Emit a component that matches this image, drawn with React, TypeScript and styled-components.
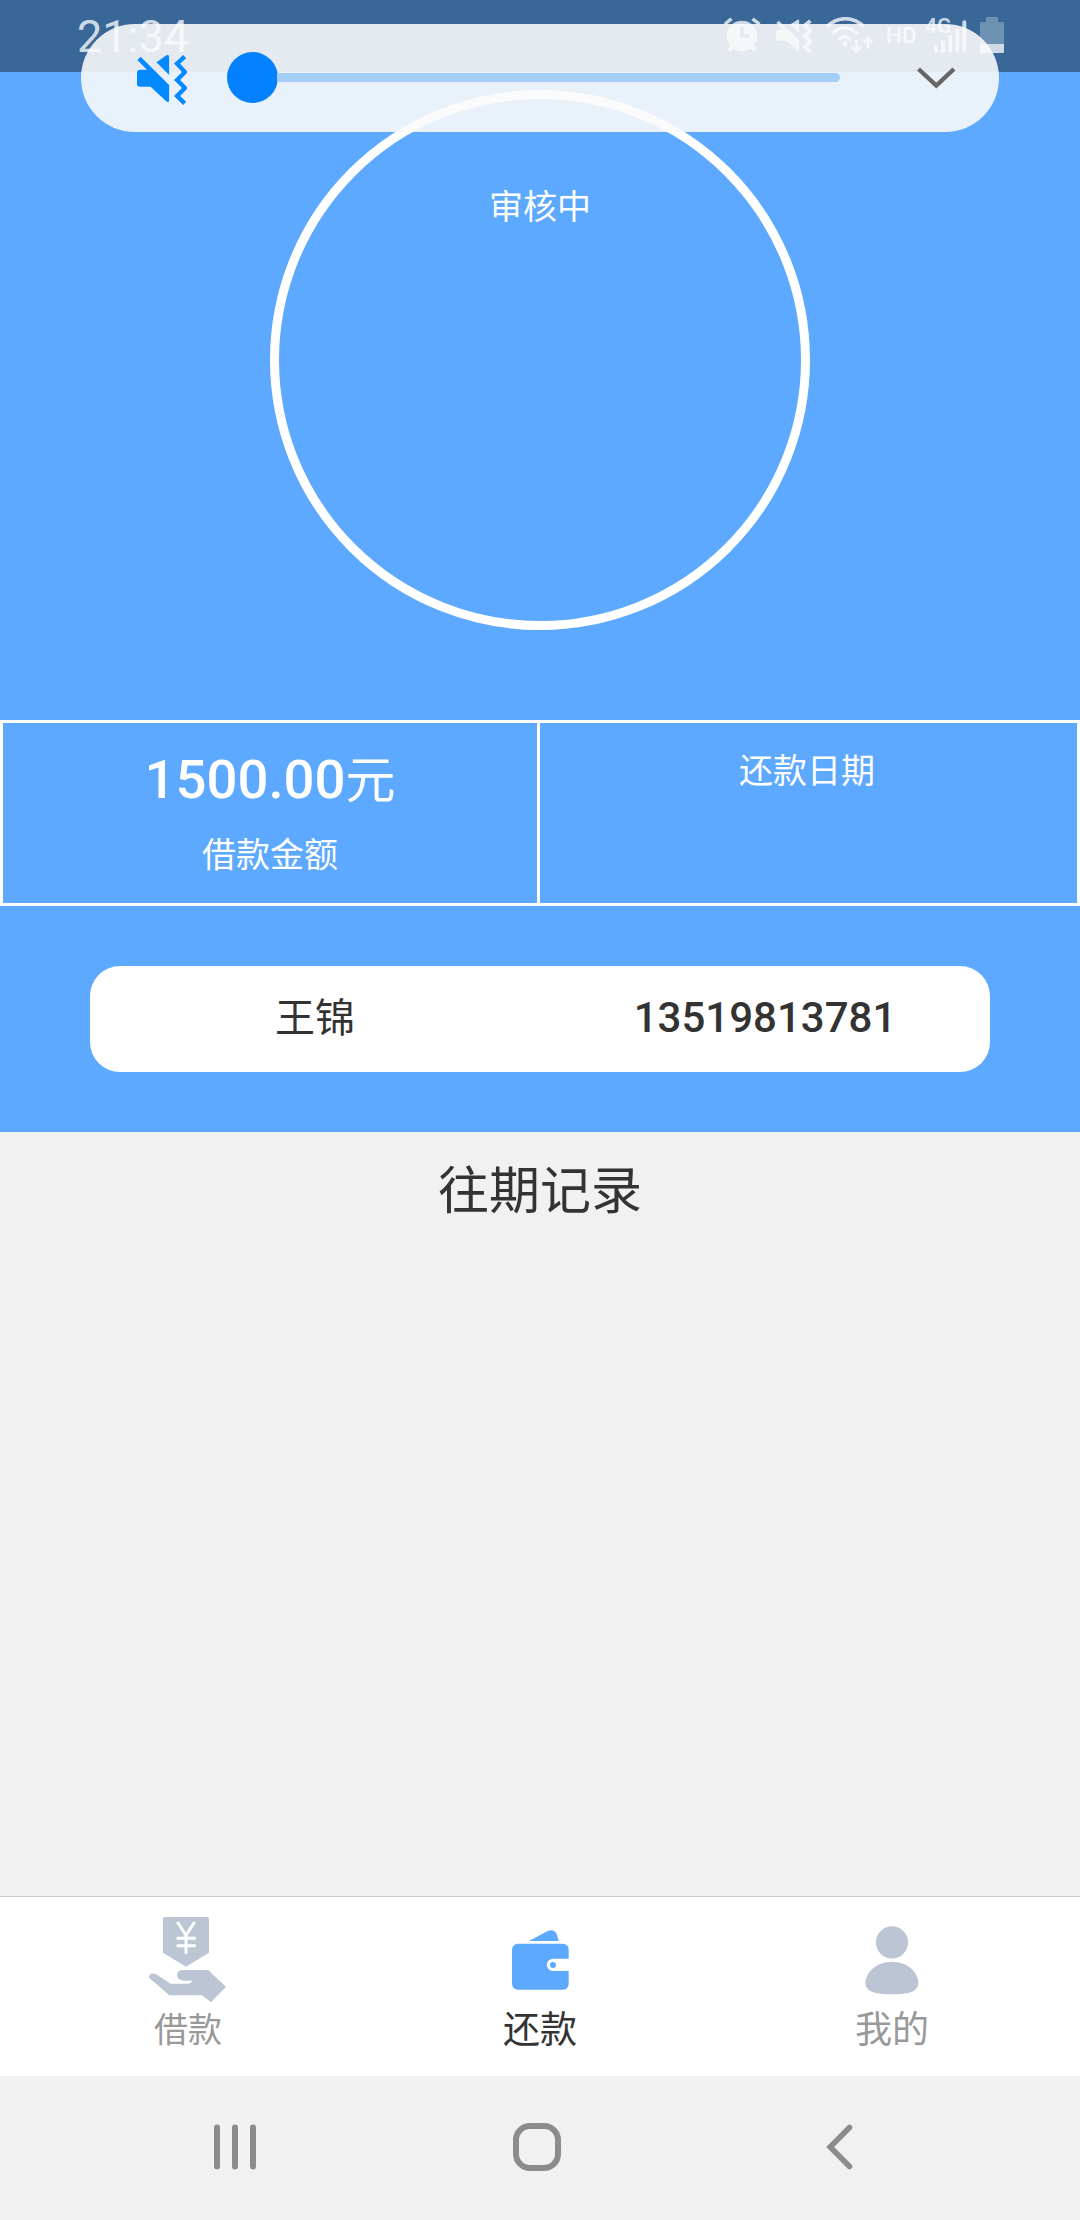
import React from "react";
import styled, { createGlobalStyle } from "styled-components";

const GlobalStyle = createGlobalStyle`
  *, *::before, *::after { box-sizing: border-box; }
  body { margin: 0; background: #f1f1f1; }
  svg { display: block; flex: none; }
`;

const Screen = styled.div`
  position: relative;
  display: flex;
  flex-direction: column;
  width: 1080px;
  height: 2220px;
  overflow: hidden;
  background: #f1f1f1;
  color: #333;
  font-family: Roboto, "Noto Sans CJK SC", sans-serif;
`;

const StatusBar = styled.header`
  display: flex;
  align-items: flex-start;
  height: 72px;
  padding: 17px 76px 0 77px;
  background: #386798;
  color: rgba(255, 255, 255, 0.76);
`;

const Clock = styled.span`
  margin-right: auto;
  font-size: 45px;
  line-height: 40px;
`;

const StatusIcons = styled.div`
  display: flex;
  align-items: flex-start;
  height: 36px;
`;

const StatusSlot = styled.div<{ $gap: number }>`
  position: relative;
  margin-left: ${(p) => p.$gap}px;
`;

const HdMark = styled.span`
  display: block;
  width: 30px;
  font-size: 22.5px;
  font-weight: 600;
  line-height: 36px;
`;

const NetworkMark = styled.span`
  position: absolute;
  left: -9px;
  top: -1px;
  font-size: 21px;
  font-weight: 600;
  line-height: 21px;
`;

const VolumePanel = styled.section`
  position: absolute;
  left: 81px;
  top: 24px;
  z-index: 2;
  display: flex;
  align-items: center;
  width: 918px;
  height: 108px;
  padding-left: 56px;
  border-radius: 54px;
  background: rgba(250, 250, 250, 0.89);
`;

const Slider = styled.div`
  display: flex;
  align-items: center;
  width: 613px;
  height: 53px;
  margin: 0 77px 2px 40px;
`;

const Thumb = styled.div`
  width: 51px;
  height: 51px;
  border-radius: 50%;
  background: #0381ff;
`;

const Track = styled.div`
  flex: 1;
  height: 9px;
  margin-left: -1px;
  border-radius: 0 5px 5px 0;
  background: #a4cef8;
`;

const Hero = styled.section`
  display: flex;
  flex-direction: column;
  align-items: center;
  height: 1060px;
  padding-top: 18px;
  background: #5ca9ff;
  color: #fff;
`;

const StatusRing = styled.div`
  display: flex;
  justify-content: center;
  width: 540px;
  height: 540px;
  padding-top: 83px;
  border: 9px solid #fff;
  border-radius: 50%;
`;

const Caption = styled.span`
  font-size: 34px;
  line-height: 50px;
`;

const Summary = styled.div`
  display: grid;
  grid-template-columns: 534px 534px;
  column-gap: 3px;
  width: 1080px;
  height: 186px;
  margin-top: 90px;
  border: 3px solid #fff;
  background: linear-gradient(#fff, #fff) 534px 0 / 3px 100% no-repeat;
`;

const SummaryCell = styled.div`
  display: flex;
  flex-direction: column;
  align-items: center;
  padding-top: 23px;
`;

const Amount = styled.strong`
  display: flex;
  align-items: baseline;
  height: 62px;
  margin-bottom: 22px;
  font-size: 54.5px;
  font-weight: 500;
  line-height: 66px;
`;

const Unit = styled.span`
  font-size: 50px;
  font-weight: 400;
`;

const BorrowerCard = styled.div`
  display: grid;
  grid-template-columns: 1fr 1fr;
  width: 900px;
  height: 106px;
  margin-top: 60px;
  border-radius: 30px;
  background: #fff;
  color: #333;
  text-align: center;
`;

const BorrowerName = styled.span`
  font-size: 40px;
  line-height: 105px;
`;

const BorrowerPhone = styled.span`
  font-size: 42px;
  font-weight: 500;
  line-height: 104px;
`;

const History = styled.main`
  flex: 1;
`;

const HistoryTitle = styled.h2`
  margin: 23px 0 0;
  font-size: 51px;
  font-weight: 400;
  line-height: 74px;
  text-align: center;
`;

const TabBar = styled.nav`
  display: grid;
  grid-template-columns: repeat(3, 352px);
  height: 180px;
  padding-left: 12px;
  border-top: 1px solid #ccc;
  background: #fff;
`;

const Tab = styled.div<{ $active?: boolean }>`
  display: flex;
  flex-direction: column;
  align-items: center;
  color: ${(p) => (p.$active ? "#333" : "#999")};
`;

const TabIcon = styled.div`
  display: flex;
  align-items: center;
  height: 110px;
  padding-top: 16px;
`;

const TabLabel = styled.span<{ $size: number }>`
  font-size: ${(p) => p.$size}px;
  line-height: 47px;
`;

const SystemNav = styled.footer`
  display: grid;
  grid-template-columns: 300px 313px 27px;
  align-items: center;
  height: 144px;
  padding: 0 0 3px 213px;
  background: #f1f1f1;
  color: #8c8c8c;
`;

const MuteIcon = ({
  width,
  height,
  color,
  wave = 13,
}: {
  width: number;
  height: number;
  color: string;
  wave?: number;
}) => (
  <svg width={width} height={height} viewBox="231 153 151 162" preserveAspectRatio="none">
    <path
      fill={color}
      d="M232 180 242 170 328 255V302Q327 308 321 305L272 260H240Q231 260 231 252V218Q231 209 240 209H261ZM290 187 320 166Q328 162 328 170V225Z"
    />
    <path d="M375 170 352 191 376 216 352 240 376 264 352 288 375 310" fill="none" stroke={color} strokeWidth={wave} />
  </svg>
);

const AlarmIcon = () => (
  <svg width="37" height="36" viewBox="724 17 37 36">
    <path
      fill="currentColor"
      fillRule="evenodd"
      d="M742 20.700A15.300 15.300 0 0 1 753.800 45.700L757 49 754 52 750.500 48.800A15.300 15.300 0 0 1 733.500 48.800L730 52 727 49 730.200 45.700A15.300 15.300 0 0 1 742 20.700ZM740.300 27V37.500H749.500V34.200H743.600V27Z"
    />
    <path d="M724.800 24.200 731.500 18.800M752.500 18.800 759.500 24.200" fill="none" stroke="currentColor" strokeWidth="3.400" />
  </svg>
);

const WifiIcon = () => (
  <svg width="47" height="36" viewBox="436 51 141 108">
    <g fill="none" stroke="currentColor" strokeWidth="10.5">
      <path d="M439 79Q465 56 494 56T550 79" />
      <path d="M454 102Q472 83 492 83T531 102" />
      <path d="M474 120Q483 110 492 110T512 120" />
      <path d="M527 120V153M514 141 527 154 540 141M562 146V114M549 127 562 114 575 127" strokeWidth="8.5" />
    </g>
    <circle cx="493" cy="131" r="8" fill="currentColor" />
  </svg>
);

const SignalIcon = () => (
  <svg width="33" height="36" viewBox="762 51 99 108">
    <path
      d="M768 143V153M789 126V153M811 110V153M832 92V153M853 67V153"
      fill="none"
      stroke="currentColor"
      strokeWidth="12"
      strokeLinecap="round"
    />
  </svg>
);

const BatteryIcon = () => (
  <svg width="24" height="36" viewBox="0 0 24 36">
    <path d="M6 0H18V5H23Q24 5 24 6V27H0V6Q0 5 1 5H6Z" fill="#fff" fillOpacity=".28" />
    <path d="M0 27H24V35Q24 36 23 36H1Q0 36 0 35Z" fill="currentColor" />
  </svg>
);

const ChevronDown = () => (
  <svg width="39" height="22" viewBox="0 0 39 22">
    <path d="M1.5 2 19.3 18.6 37 2" fill="none" stroke="#666" strokeWidth="4.4" />
  </svg>
);

const LoanIcon = () => (
  <svg width="78" height="86" viewBox="87 113 234 258">
    <path
      fill="#bcc5d4"
      d="M136 113H261Q267 113 267 119V220L198 262 129 220V119Q129 113 136 113ZM88 296C84 286 96 279 107 284L152 313H205Q213 311 218 304H190Q172 303 171 288 172 272 188 272H264L318 322 273 369 246 348H148Z"
    />
    <path d="M172 128 198 168 224 128M198 166V223M170 177H227M170 199H227" fill="none" stroke="#fff" strokeWidth="9" />
  </svg>
);

const WalletIcon = () => (
  <svg width="57" height="60" viewBox="93 87 171 180">
    <path
      fill="#5ca9ff"
      d="M144 120 200 90Q219 83 227 99L233 120ZM111 128H245Q263 129 263 146V173H216A18.500 18.500 0 0 0 216 210H263V248Q262 266 245 266H111Q94 265 93 248V146Q94 129 111 128Z"
    />
    <circle cx="216" cy="192" r="9" fill="#5ca9ff" />
  </svg>
);

const ProfileIcon = () => (
  <svg width="54" height="69" viewBox="104 75 162 207">
    <circle cx="185" cy="124" r="48.500" fill="#bcc5d4" />
    <path
      fill="#bcc5d4"
      d="M185 182C232 182 264 215 264 246 263 274 231 280 185 280S106 274 105 246C105 215 138 182 185 182Z"
    />
  </svg>
);

const RecentsIcon = () => (
  <svg width="44" height="46" viewBox="0 0 44 46">
    <path d="M4 3.500V42.500M22 3.500V42.500M40 3.500V42.500" stroke="currentColor" strokeWidth="6" strokeLinecap="round" />
  </svg>
);

const HomeIcon = () => (
  <svg width="48" height="48" viewBox="0 0 48 48">
    <rect x="3" y="3" width="42" height="42" rx="14" fill="none" stroke="currentColor" strokeWidth="6" />
  </svg>
);

const BackIcon = () => (
  <svg width="27" height="46" viewBox="0 0 27 46">
    <path d="M23.500 3.500 4.200 23 23.500 42.500" fill="none" stroke="currentColor" strokeWidth="5.600" strokeLinecap="round" />
  </svg>
);

const tabs = [
  { label: "借款", size: 34, icon: <LoanIcon />, active: false },
  { label: "还款", size: 37, icon: <WalletIcon />, active: true },
  { label: "我的", size: 37, icon: <ProfileIcon />, active: false },
];

export default function App() {
  return (
    <>
      <GlobalStyle />
      <Screen>
        <StatusBar>
          <Clock>21:34</Clock>
          <StatusIcons>
            <StatusSlot $gap={0}>
              <AlarmIcon />
            </StatusSlot>
            <StatusSlot $gap={15}>
              <MuteIcon width={36} height={36} color="currentColor" wave={17} />
            </StatusSlot>
            <StatusSlot $gap={14}>
              <WifiIcon />
            </StatusSlot>
            <StatusSlot $gap={13}>
              <HdMark>HD</HdMark>
            </StatusSlot>
            <StatusSlot $gap={18}>
              <NetworkMark>4G</NetworkMark>
              <SignalIcon />
            </StatusSlot>
            <StatusSlot $gap={13}>
              <BatteryIcon />
            </StatusSlot>
          </StatusIcons>
        </StatusBar>

        <VolumePanel>
          <MuteIcon width={50} height={54} color="#0589ff" />
          <Slider>
            <Thumb />
            <Track />
          </Slider>
          <ChevronDown />
        </VolumePanel>

        <Hero>
          <StatusRing>
            <Caption>审核中</Caption>
          </StatusRing>
          <Summary>
            <SummaryCell>
              <Amount>
                1500.00<Unit>元</Unit>
              </Amount>
              <Caption>借款金额</Caption>
            </SummaryCell>
            <SummaryCell>
              <Caption>还款日期</Caption>
            </SummaryCell>
          </Summary>
          <BorrowerCard>
            <BorrowerName>王锦</BorrowerName>
            <BorrowerPhone>13519813781</BorrowerPhone>
          </BorrowerCard>
        </Hero>

        <History>
          <HistoryTitle>往期记录</HistoryTitle>
        </History>

        <TabBar>
          {tabs.map((tab) => (
            <Tab key={tab.label} $active={tab.active}>
              <TabIcon>{tab.icon}</TabIcon>
              <TabLabel $size={tab.size}>{tab.label}</TabLabel>
            </Tab>
          ))}
        </TabBar>

        <SystemNav>
          <RecentsIcon />
          <HomeIcon />
          <BackIcon />
        </SystemNav>
      </Screen>
    </>
  );
}
